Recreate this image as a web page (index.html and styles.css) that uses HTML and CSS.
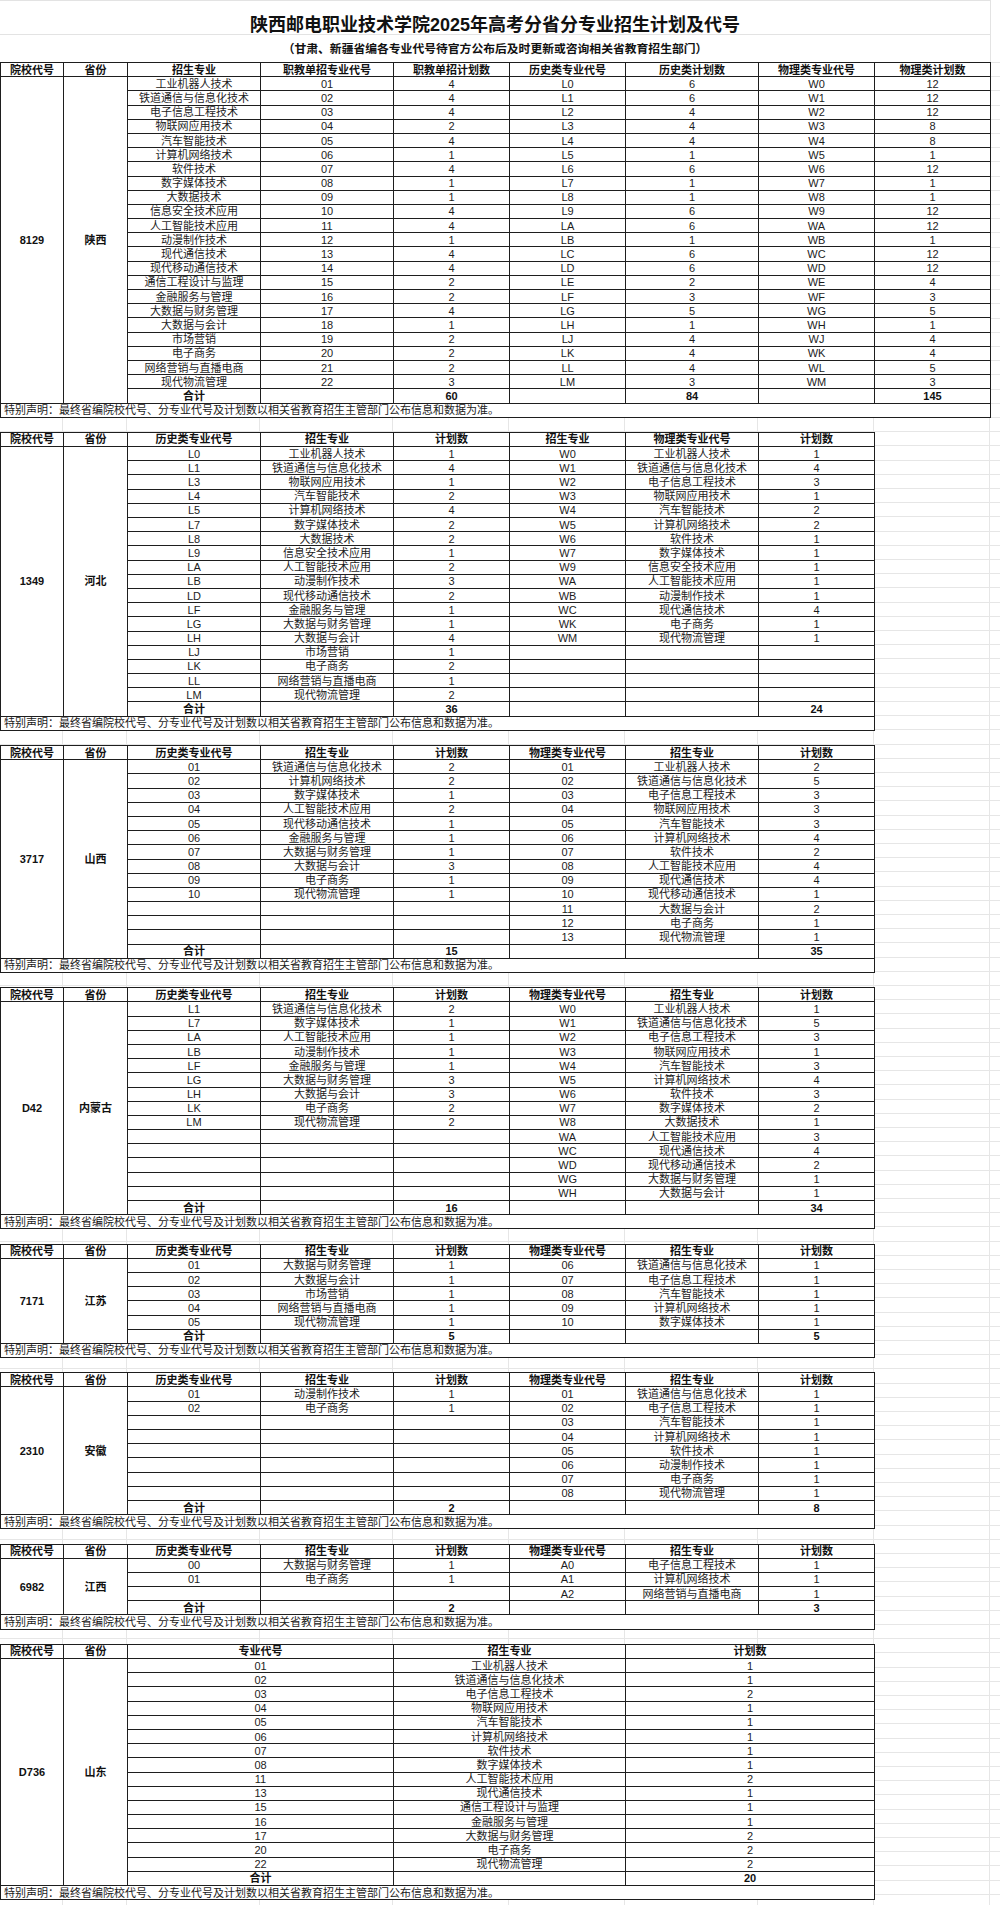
FILE: index.html
```html
<!DOCTYPE html>
<html lang="zh-CN">
<head>
<meta charset="utf-8">
<title>陕西邮电职业技术学院2025年高考分省分专业招生计划及代号</title>
<link rel="stylesheet" href="styles.css">
</head>
<body>
<div class="sheet">
  <div class="title">陕西邮电职业技术学院2025年高考分省分专业招生计划及代号</div>
  <div class="subtitle">（甘肃、新疆省编各专业代号待官方公布后及时更新或咨询相关省教育招生部门）</div>
  <div class="grid">

<table class="plan w9">
<colgroup><col class="c1"><col class="c2"><col class="c3"><col class="c3"><col class="c5"><col class="c5"><col class="c3"><col class="c5"><col class="c5"></colgroup>
<tr><th>院校代号</th><th>省份</th><th>招生专业</th><th>职教单招专业代号</th><th>职教单招计划数</th><th>历史类专业代号</th><th>历史类计划数</th><th>物理类专业代号</th><th>物理类计划数</th></tr>
<tr><td rowspan="23" class="b">8129</td><td rowspan="23" class="b">陕西</td><td>工业机器人技术</td><td>01</td><td>4</td><td>L0</td><td>6</td><td>W0</td><td>12</td></tr>
<tr><td>铁道通信与信息化技术</td><td>02</td><td>4</td><td>L1</td><td>6</td><td>W1</td><td>12</td></tr>
<tr><td>电子信息工程技术</td><td>03</td><td>4</td><td>L2</td><td>4</td><td>W2</td><td>12</td></tr>
<tr><td>物联网应用技术</td><td>04</td><td>2</td><td>L3</td><td>4</td><td>W3</td><td>8</td></tr>
<tr><td>汽车智能技术</td><td>05</td><td>4</td><td>L4</td><td>4</td><td>W4</td><td>8</td></tr>
<tr><td>计算机网络技术</td><td>06</td><td>1</td><td>L5</td><td>1</td><td>W5</td><td>1</td></tr>
<tr><td>软件技术</td><td>07</td><td>4</td><td>L6</td><td>6</td><td>W6</td><td>12</td></tr>
<tr><td>数字媒体技术</td><td>08</td><td>1</td><td>L7</td><td>1</td><td>W7</td><td>1</td></tr>
<tr><td>大数据技术</td><td>09</td><td>1</td><td>L8</td><td>1</td><td>W8</td><td>1</td></tr>
<tr><td>信息安全技术应用</td><td>10</td><td>4</td><td>L9</td><td>6</td><td>W9</td><td>12</td></tr>
<tr><td>人工智能技术应用</td><td>11</td><td>4</td><td>LA</td><td>6</td><td>WA</td><td>12</td></tr>
<tr><td>动漫制作技术</td><td>12</td><td>1</td><td>LB</td><td>1</td><td>WB</td><td>1</td></tr>
<tr><td>现代通信技术</td><td>13</td><td>4</td><td>LC</td><td>6</td><td>WC</td><td>12</td></tr>
<tr><td>现代移动通信技术</td><td>14</td><td>4</td><td>LD</td><td>6</td><td>WD</td><td>12</td></tr>
<tr><td>通信工程设计与监理</td><td>15</td><td>2</td><td>LE</td><td>2</td><td>WE</td><td>4</td></tr>
<tr><td>金融服务与管理</td><td>16</td><td>2</td><td>LF</td><td>3</td><td>WF</td><td>3</td></tr>
<tr><td>大数据与财务管理</td><td>17</td><td>4</td><td>LG</td><td>5</td><td>WG</td><td>5</td></tr>
<tr><td>大数据与会计</td><td>18</td><td>1</td><td>LH</td><td>1</td><td>WH</td><td>1</td></tr>
<tr><td>市场营销</td><td>19</td><td>2</td><td>LJ</td><td>4</td><td>WJ</td><td>4</td></tr>
<tr><td>电子商务</td><td>20</td><td>2</td><td>LK</td><td>4</td><td>WK</td><td>4</td></tr>
<tr><td>网络营销与直播电商</td><td>21</td><td>2</td><td>LL</td><td>4</td><td>WL</td><td>5</td></tr>
<tr><td>现代物流管理</td><td>22</td><td>3</td><td>LM</td><td>3</td><td>WM</td><td>3</td></tr>
<tr><td class="b">合计</td><td></td><td class="b">60</td><td></td><td class="b">84</td><td></td><td class="b">145</td></tr>
<tr><td colspan="9" class="note">特别声明：最终省编院校代号、分专业代号及计划数以相关省教育招生主管部门公布信息和数据为准。</td></tr>
</table>

<table class="plan w8">
<colgroup><col class="c1"><col class="c2"><col class="c3"><col class="c3"><col class="c5"><col class="c5"><col class="c3"><col class="c5"></colgroup>
<tr><th>院校代号</th><th>省份</th><th>历史类专业代号</th><th>招生专业</th><th>计划数</th><th>招生专业</th><th>物理类专业代号</th><th>计划数</th></tr>
<tr><td rowspan="19" class="b">1349</td><td rowspan="19" class="b">河北</td><td>L0</td><td>工业机器人技术</td><td>1</td><td>W0</td><td>工业机器人技术</td><td>1</td></tr>
<tr><td>L1</td><td>铁道通信与信息化技术</td><td>4</td><td>W1</td><td>铁道通信与信息化技术</td><td>4</td></tr>
<tr><td>L3</td><td>物联网应用技术</td><td>1</td><td>W2</td><td>电子信息工程技术</td><td>3</td></tr>
<tr><td>L4</td><td>汽车智能技术</td><td>2</td><td>W3</td><td>物联网应用技术</td><td>1</td></tr>
<tr><td>L5</td><td>计算机网络技术</td><td>4</td><td>W4</td><td>汽车智能技术</td><td>2</td></tr>
<tr><td>L7</td><td>数字媒体技术</td><td>2</td><td>W5</td><td>计算机网络技术</td><td>2</td></tr>
<tr><td>L8</td><td>大数据技术</td><td>2</td><td>W6</td><td>软件技术</td><td>1</td></tr>
<tr><td>L9</td><td>信息安全技术应用</td><td>1</td><td>W7</td><td>数字媒体技术</td><td>1</td></tr>
<tr><td>LA</td><td>人工智能技术应用</td><td>2</td><td>W9</td><td>信息安全技术应用</td><td>1</td></tr>
<tr><td>LB</td><td>动漫制作技术</td><td>3</td><td>WA</td><td>人工智能技术应用</td><td>1</td></tr>
<tr><td>LD</td><td>现代移动通信技术</td><td>2</td><td>WB</td><td>动漫制作技术</td><td>1</td></tr>
<tr><td>LF</td><td>金融服务与管理</td><td>1</td><td>WC</td><td>现代通信技术</td><td>4</td></tr>
<tr><td>LG</td><td>大数据与财务管理</td><td>1</td><td>WK</td><td>电子商务</td><td>1</td></tr>
<tr><td>LH</td><td>大数据与会计</td><td>4</td><td>WM</td><td>现代物流管理</td><td>1</td></tr>
<tr><td>LJ</td><td>市场营销</td><td>1</td><td></td><td></td><td></td></tr>
<tr><td>LK</td><td>电子商务</td><td>2</td><td></td><td></td><td></td></tr>
<tr><td>LL</td><td>网络营销与直播电商</td><td>1</td><td></td><td></td><td></td></tr>
<tr><td>LM</td><td>现代物流管理</td><td>2</td><td></td><td></td><td></td></tr>
<tr><td class="b">合计</td><td></td><td class="b">36</td><td></td><td></td><td class="b">24</td></tr>
<tr><td colspan="8" class="note">特别声明：最终省编院校代号、分专业代号及计划数以相关省教育招生主管部门公布信息和数据为准。</td></tr>
</table>

<table class="plan w8">
<colgroup><col class="c1"><col class="c2"><col class="c3"><col class="c3"><col class="c5"><col class="c5"><col class="c3"><col class="c5"></colgroup>
<tr><th>院校代号</th><th>省份</th><th>历史类专业代号</th><th>招生专业</th><th>计划数</th><th>物理类专业代号</th><th>招生专业</th><th>计划数</th></tr>
<tr><td rowspan="14" class="b">3717</td><td rowspan="14" class="b">山西</td><td>01</td><td>铁道通信与信息化技术</td><td>2</td><td>01</td><td>工业机器人技术</td><td>2</td></tr>
<tr><td>02</td><td>计算机网络技术</td><td>2</td><td>02</td><td>铁道通信与信息化技术</td><td>5</td></tr>
<tr><td>03</td><td>数字媒体技术</td><td>1</td><td>03</td><td>电子信息工程技术</td><td>3</td></tr>
<tr><td>04</td><td>人工智能技术应用</td><td>2</td><td>04</td><td>物联网应用技术</td><td>3</td></tr>
<tr><td>05</td><td>现代移动通信技术</td><td>1</td><td>05</td><td>汽车智能技术</td><td>3</td></tr>
<tr><td>06</td><td>金融服务与管理</td><td>1</td><td>06</td><td>计算机网络技术</td><td>4</td></tr>
<tr><td>07</td><td>大数据与财务管理</td><td>1</td><td>07</td><td>软件技术</td><td>2</td></tr>
<tr><td>08</td><td>大数据与会计</td><td>3</td><td>08</td><td>人工智能技术应用</td><td>4</td></tr>
<tr><td>09</td><td>电子商务</td><td>1</td><td>09</td><td>现代通信技术</td><td>4</td></tr>
<tr><td>10</td><td>现代物流管理</td><td>1</td><td>10</td><td>现代移动通信技术</td><td>1</td></tr>
<tr><td></td><td></td><td></td><td>11</td><td>大数据与会计</td><td>2</td></tr>
<tr><td></td><td></td><td></td><td>12</td><td>电子商务</td><td>1</td></tr>
<tr><td></td><td></td><td></td><td>13</td><td>现代物流管理</td><td>1</td></tr>
<tr><td class="b">合计</td><td></td><td class="b">15</td><td></td><td></td><td class="b">35</td></tr>
<tr><td colspan="8" class="note">特别声明：最终省编院校代号、分专业代号及计划数以相关省教育招生主管部门公布信息和数据为准。</td></tr>
</table>

<table class="plan w8">
<colgroup><col class="c1"><col class="c2"><col class="c3"><col class="c3"><col class="c5"><col class="c5"><col class="c3"><col class="c5"></colgroup>
<tr><th>院校代号</th><th>省份</th><th>历史类专业代号</th><th>招生专业</th><th>计划数</th><th>物理类专业代号</th><th>招生专业</th><th>计划数</th></tr>
<tr><td rowspan="15" class="b">D42</td><td rowspan="15" class="b">内蒙古</td><td>L1</td><td>铁道通信与信息化技术</td><td>2</td><td>W0</td><td>工业机器人技术</td><td>1</td></tr>
<tr><td>L7</td><td>数字媒体技术</td><td>1</td><td>W1</td><td>铁道通信与信息化技术</td><td>5</td></tr>
<tr><td>LA</td><td>人工智能技术应用</td><td>1</td><td>W2</td><td>电子信息工程技术</td><td>3</td></tr>
<tr><td>LB</td><td>动漫制作技术</td><td>1</td><td>W3</td><td>物联网应用技术</td><td>1</td></tr>
<tr><td>LF</td><td>金融服务与管理</td><td>1</td><td>W4</td><td>汽车智能技术</td><td>3</td></tr>
<tr><td>LG</td><td>大数据与财务管理</td><td>3</td><td>W5</td><td>计算机网络技术</td><td>4</td></tr>
<tr><td>LH</td><td>大数据与会计</td><td>3</td><td>W6</td><td>软件技术</td><td>3</td></tr>
<tr><td>LK</td><td>电子商务</td><td>2</td><td>W7</td><td>数字媒体技术</td><td>2</td></tr>
<tr><td>LM</td><td>现代物流管理</td><td>2</td><td>W8</td><td>大数据技术</td><td>1</td></tr>
<tr><td></td><td></td><td></td><td>WA</td><td>人工智能技术应用</td><td>3</td></tr>
<tr><td></td><td></td><td></td><td>WC</td><td>现代通信技术</td><td>4</td></tr>
<tr><td></td><td></td><td></td><td>WD</td><td>现代移动通信技术</td><td>2</td></tr>
<tr><td></td><td></td><td></td><td>WG</td><td>大数据与财务管理</td><td>1</td></tr>
<tr><td></td><td></td><td></td><td>WH</td><td>大数据与会计</td><td>1</td></tr>
<tr><td class="b">合计</td><td></td><td class="b">16</td><td></td><td></td><td class="b">34</td></tr>
<tr><td colspan="8" class="note">特别声明：最终省编院校代号、分专业代号及计划数以相关省教育招生主管部门公布信息和数据为准。</td></tr>
</table>

<table class="plan w8">
<colgroup><col class="c1"><col class="c2"><col class="c3"><col class="c3"><col class="c5"><col class="c5"><col class="c3"><col class="c5"></colgroup>
<tr><th>院校代号</th><th>省份</th><th>历史类专业代号</th><th>招生专业</th><th>计划数</th><th>物理类专业代号</th><th>招生专业</th><th>计划数</th></tr>
<tr><td rowspan="6" class="b">7171</td><td rowspan="6" class="b">江苏</td><td>01</td><td>大数据与财务管理</td><td>1</td><td>06</td><td>铁道通信与信息化技术</td><td>1</td></tr>
<tr><td>02</td><td>大数据与会计</td><td>1</td><td>07</td><td>电子信息工程技术</td><td>1</td></tr>
<tr><td>03</td><td>市场营销</td><td>1</td><td>08</td><td>汽车智能技术</td><td>1</td></tr>
<tr><td>04</td><td>网络营销与直播电商</td><td>1</td><td>09</td><td>计算机网络技术</td><td>1</td></tr>
<tr><td>05</td><td>现代物流管理</td><td>1</td><td>10</td><td>数字媒体技术</td><td>1</td></tr>
<tr><td class="b">合计</td><td></td><td class="b">5</td><td></td><td></td><td class="b">5</td></tr>
<tr><td colspan="8" class="note">特别声明：最终省编院校代号、分专业代号及计划数以相关省教育招生主管部门公布信息和数据为准。</td></tr>
</table>

<table class="plan w8">
<colgroup><col class="c1"><col class="c2"><col class="c3"><col class="c3"><col class="c5"><col class="c5"><col class="c3"><col class="c5"></colgroup>
<tr><th>院校代号</th><th>省份</th><th>历史类专业代号</th><th>招生专业</th><th>计划数</th><th>物理类专业代号</th><th>招生专业</th><th>计划数</th></tr>
<tr><td rowspan="9" class="b">2310</td><td rowspan="9" class="b">安徽</td><td>01</td><td>动漫制作技术</td><td>1</td><td>01</td><td>铁道通信与信息化技术</td><td>1</td></tr>
<tr><td>02</td><td>电子商务</td><td>1</td><td>02</td><td>电子信息工程技术</td><td>1</td></tr>
<tr><td></td><td></td><td></td><td>03</td><td>汽车智能技术</td><td>1</td></tr>
<tr><td></td><td></td><td></td><td>04</td><td>计算机网络技术</td><td>1</td></tr>
<tr><td></td><td></td><td></td><td>05</td><td>软件技术</td><td>1</td></tr>
<tr><td></td><td></td><td></td><td>06</td><td>动漫制作技术</td><td>1</td></tr>
<tr><td></td><td></td><td></td><td>07</td><td>电子商务</td><td>1</td></tr>
<tr><td></td><td></td><td></td><td>08</td><td>现代物流管理</td><td>1</td></tr>
<tr><td class="b">合计</td><td></td><td class="b">2</td><td></td><td></td><td class="b">8</td></tr>
<tr><td colspan="8" class="note">特别声明：最终省编院校代号、分专业代号及计划数以相关省教育招生主管部门公布信息和数据为准。</td></tr>
</table>

<table class="plan w8">
<colgroup><col class="c1"><col class="c2"><col class="c3"><col class="c3"><col class="c5"><col class="c5"><col class="c3"><col class="c5"></colgroup>
<tr><th>院校代号</th><th>省份</th><th>历史类专业代号</th><th>招生专业</th><th>计划数</th><th>物理类专业代号</th><th>招生专业</th><th>计划数</th></tr>
<tr><td rowspan="4" class="b">6982</td><td rowspan="4" class="b">江西</td><td>00</td><td>大数据与财务管理</td><td>1</td><td>A0</td><td>电子信息工程技术</td><td>1</td></tr>
<tr><td>01</td><td>电子商务</td><td>1</td><td>A1</td><td>计算机网络技术</td><td>1</td></tr>
<tr><td></td><td></td><td></td><td>A2</td><td>网络营销与直播电商</td><td>1</td></tr>
<tr><td class="b">合计</td><td></td><td class="b">2</td><td></td><td></td><td class="b">3</td></tr>
<tr><td colspan="8" class="note">特别声明：最终省编院校代号、分专业代号及计划数以相关省教育招生主管部门公布信息和数据为准。</td></tr>
</table>

<table class="plan w8">
<colgroup><col class="c1"><col class="c2"><col class="c3"><col class="c3"><col class="c5"><col class="c5"><col class="c3"><col class="c5"></colgroup>
<tr><th>院校代号</th><th>省份</th><th colspan="2">专业代号</th><th colspan="2">招生专业</th><th colspan="2">计划数</th></tr>
<tr><td rowspan="16" class="b">D736</td><td rowspan="16" class="b">山东</td><td colspan="2">01</td><td colspan="2">工业机器人技术</td><td colspan="2">1</td></tr>
<tr><td colspan="2">02</td><td colspan="2">铁道通信与信息化技术</td><td colspan="2">1</td></tr>
<tr><td colspan="2">03</td><td colspan="2">电子信息工程技术</td><td colspan="2">2</td></tr>
<tr><td colspan="2">04</td><td colspan="2">物联网应用技术</td><td colspan="2">1</td></tr>
<tr><td colspan="2">05</td><td colspan="2">汽车智能技术</td><td colspan="2">1</td></tr>
<tr><td colspan="2">06</td><td colspan="2">计算机网络技术</td><td colspan="2">1</td></tr>
<tr><td colspan="2">07</td><td colspan="2">软件技术</td><td colspan="2">1</td></tr>
<tr><td colspan="2">08</td><td colspan="2">数字媒体技术</td><td colspan="2">1</td></tr>
<tr><td colspan="2">11</td><td colspan="2">人工智能技术应用</td><td colspan="2">2</td></tr>
<tr><td colspan="2">13</td><td colspan="2">现代通信技术</td><td colspan="2">1</td></tr>
<tr><td colspan="2">15</td><td colspan="2">通信工程设计与监理</td><td colspan="2">1</td></tr>
<tr><td colspan="2">16</td><td colspan="2">金融服务与管理</td><td colspan="2">1</td></tr>
<tr><td colspan="2">17</td><td colspan="2">大数据与财务管理</td><td colspan="2">2</td></tr>
<tr><td colspan="2">20</td><td colspan="2">电子商务</td><td colspan="2">2</td></tr>
<tr><td colspan="2">22</td><td colspan="2">现代物流管理</td><td colspan="2">2</td></tr>
<tr><td colspan="2" class="b">合计</td><td colspan="2"></td><td colspan="2" class="b">20</td></tr>
<tr><td colspan="8" class="note">特别声明：最终省编院校代号、分专业代号及计划数以相关省教育招生主管部门公布信息和数据为准。</td></tr>
</table>

  </div>
</div>
</body>
</html>
```

FILE: styles.css
```css
* { box-sizing: border-box; }
html, body { margin: 0; padding: 0; background: #fff; }
body {
  font-family: "Liberation Sans", "Noto Sans CJK SC", sans-serif;
  color: #1c1c1c;
  width: 1000px;
}
.sheet { width: 1000px; }
.title {
  width: 991px;
  height: 35px;
  border-top: 1px solid #e3e3e3;
  border-bottom: 1px solid #e3e3e3;
  border-right: 1px solid #e3e3e3;
  padding-top: 14px;
  font-size: 18px;
  line-height: 20px;
  font-weight: bold;
  text-align: center;
  color: #111;
}
.subtitle {
  width: 991px;
  height: 27px;
  border-right: 1px solid #e3e3e3;
  padding-top: 6px;
  font-size: 11.8px;
  line-height: 16px;
  font-weight: bold;
  text-align: center;
  color: #111;
}
.grid {
  background-image:
    linear-gradient(to right,
      transparent 62px, #e6e6e6 62px 63px,
      transparent 63px 126px, #e6e6e6 126px 127px,
      transparent 127px 259px, #e6e6e6 259px 260px,
      transparent 260px 392px, #e6e6e6 392px 393px,
      transparent 393px 508px, #e6e6e6 508px 509px,
      transparent 509px 624px, #e6e6e6 624px 625px,
      transparent 625px 757px, #e6e6e6 757px 758px,
      transparent 758px 873px, #e6e6e6 873px 874px,
      transparent 874px 989px, #e6e6e6 989px 990px,
      transparent 990px),
    repeating-linear-gradient(to bottom, #e6e6e6 0 1px, transparent 1px 14.2px);
  padding-bottom: 1px;
}
.plan {
  border-collapse: collapse;
  table-layout: fixed;
  background: #fff;
  font-size: 11px;
  margin-bottom: 14.2px;
}
.plan.w9 { width: 990px; }
.plan.w8 { width: 874px; }
.plan .c1 { width: 63px; }
.plan .c2 { width: 64px; }
.plan .c3 { width: 133px; }
.plan .c5 { width: 116px; }
.plan tr { height: 14.2px; }
.plan th, .plan td {
  border: 1px solid #1e1e1e;
  padding: 0;
  height: 14.2px;
  line-height: 12px;
  text-align: center;
  vertical-align: middle;
  white-space: nowrap;
  overflow: hidden;
}
.plan th { font-weight: bold; color: #111; }
.plan td.b { font-weight: bold; color: #111; }
.plan td.note {
  text-align: left;
  padding-left: 3px;
  color: #1a1a1a;
}
```
